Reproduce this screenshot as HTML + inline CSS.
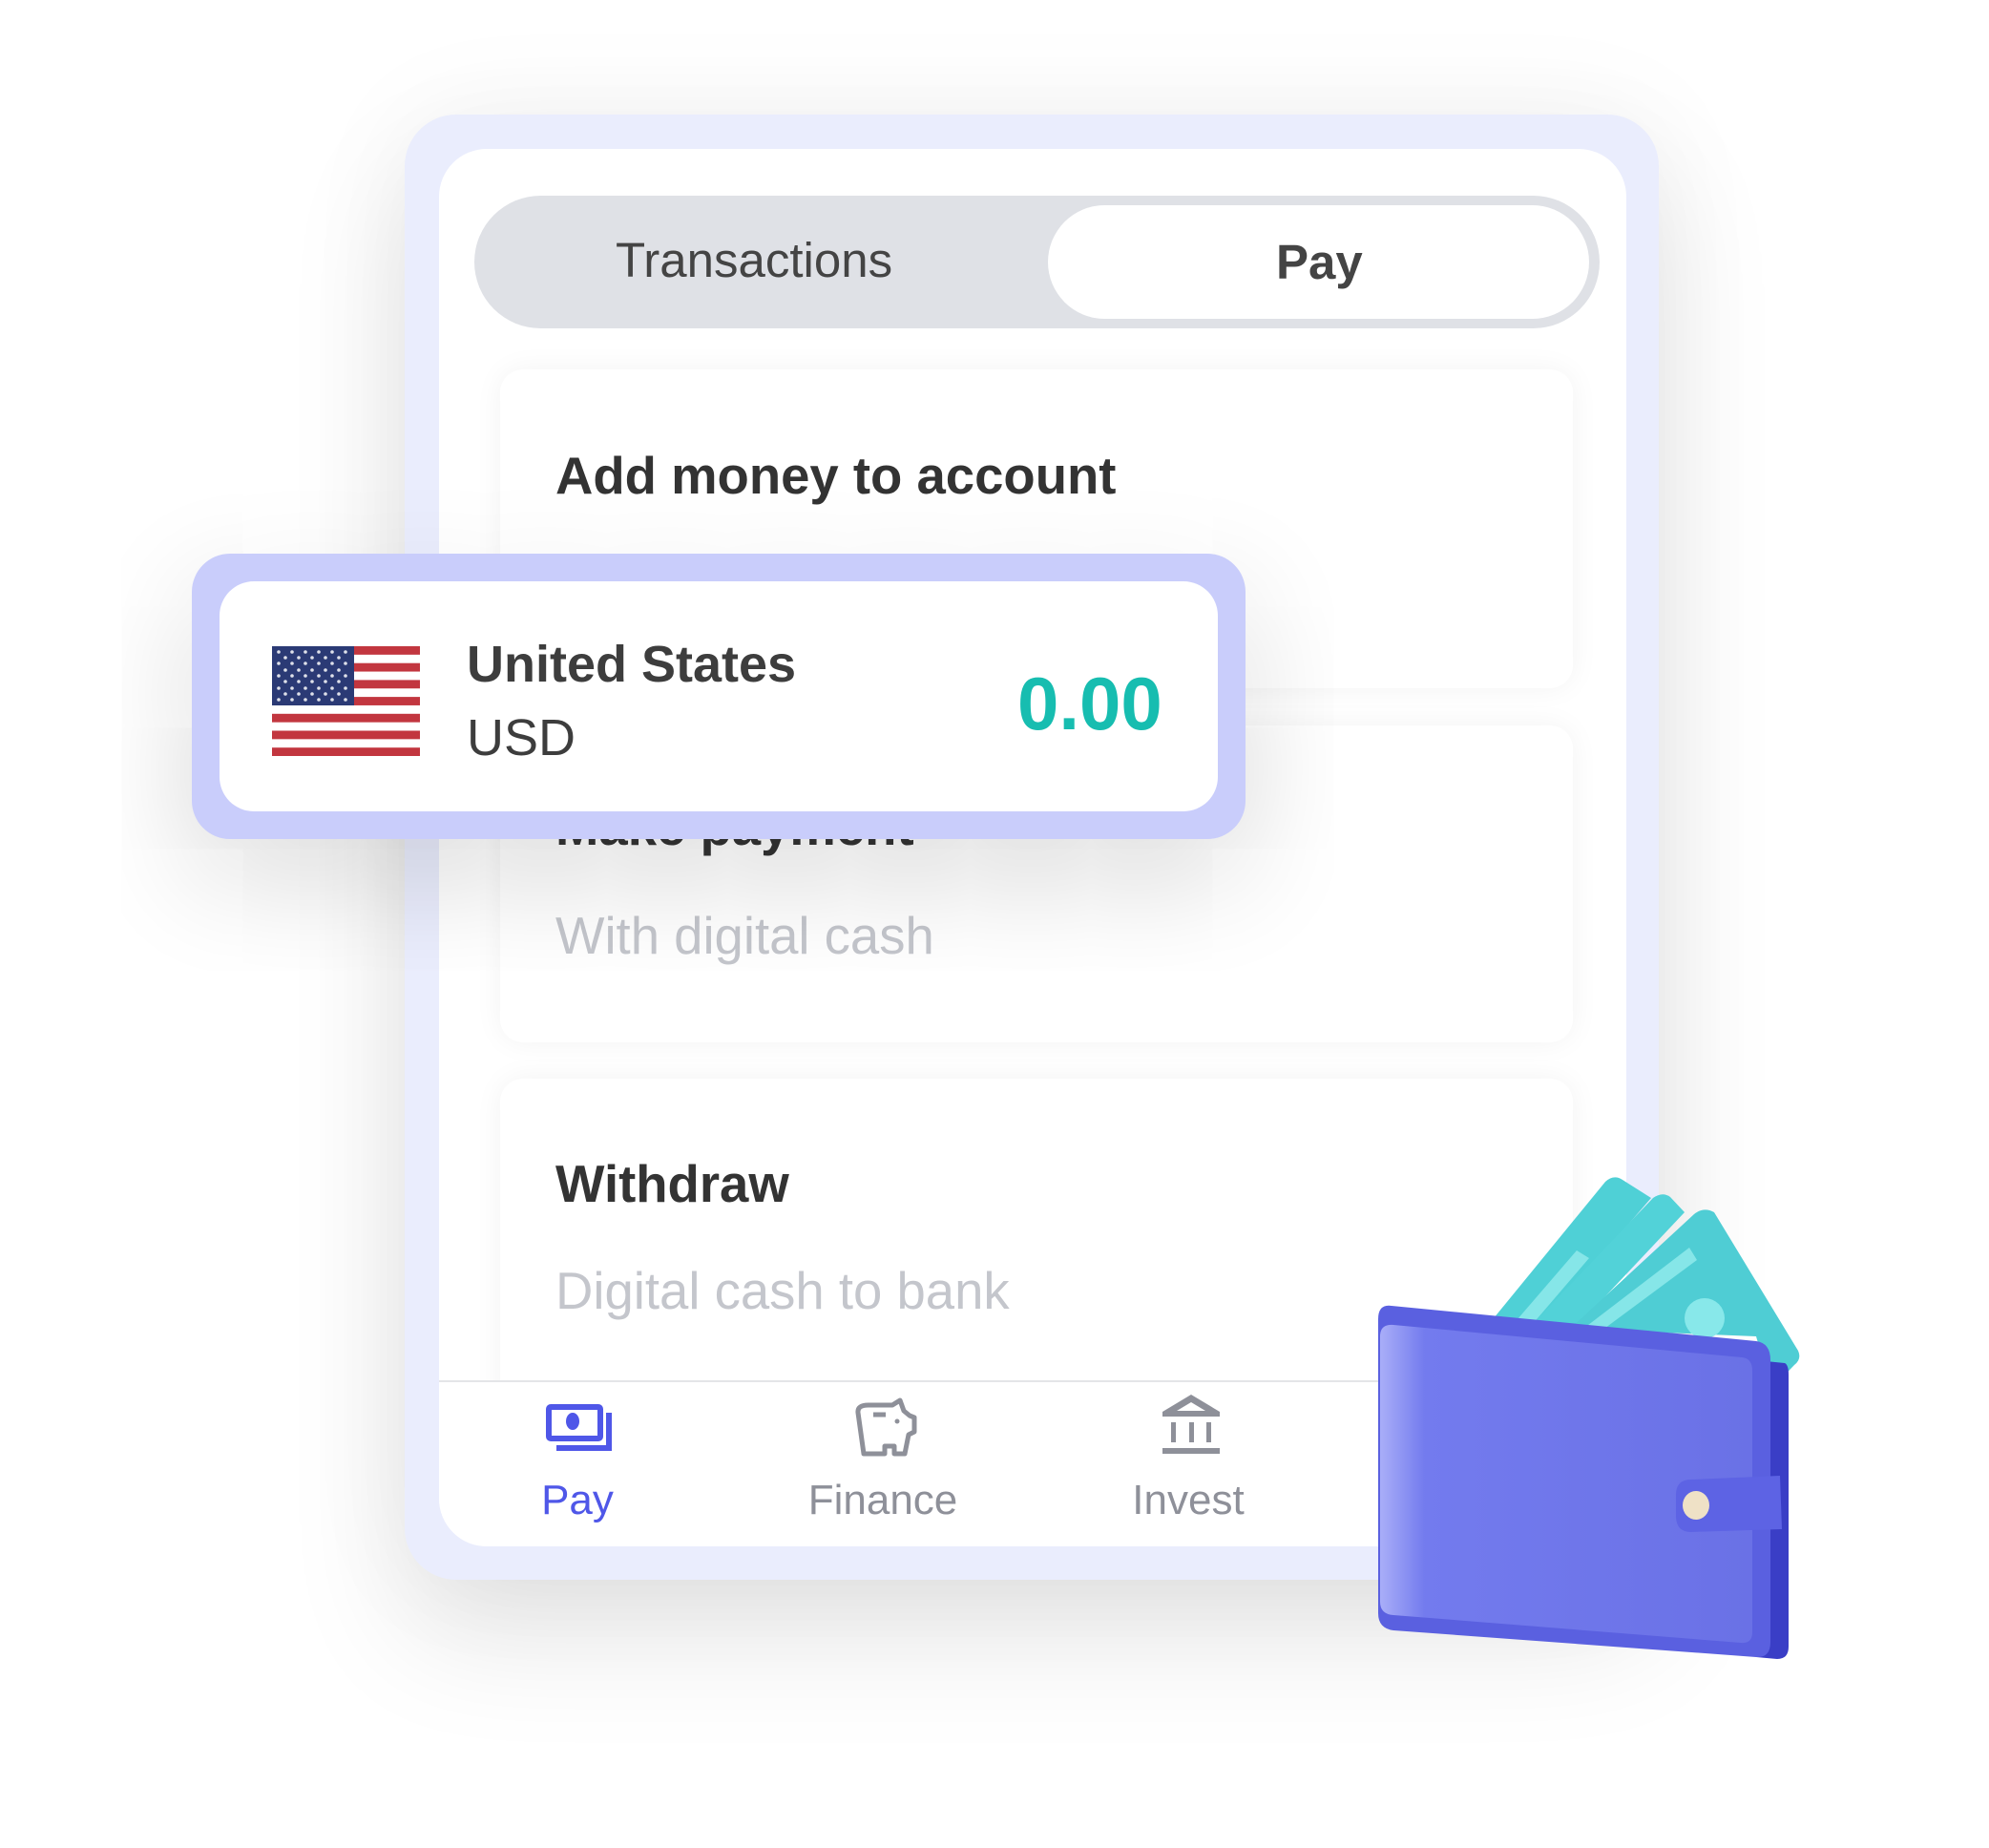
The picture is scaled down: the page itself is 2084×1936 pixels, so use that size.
<!DOCTYPE html>
<html><head><meta charset="utf-8"><style>
*{margin:0;padding:0;box-sizing:border-box}
body{width:2084px;height:1936px;background:#fff;position:relative;overflow:hidden;font-family:"Liberation Sans",Arial,sans-serif}
.a{position:absolute}
.t{position:absolute;white-space:nowrap;line-height:1}
</style></head><body>
<div class="a" style="left:424px;top:120px;width:1314px;height:1535px;border-radius:54px;background:#eaedfd;box-shadow:0 60px 160px rgba(0,0,0,0.10),0 0 120px rgba(0,0,0,0.05)"></div>
<div class="a" style="left:460px;top:156px;width:1244px;height:1464px;border-radius:50px;background:#fff;overflow:hidden">
  <div class="a" style="left:37px;top:49px;width:1179px;height:139px;border-radius:70px;background:#dfe1e6"></div>
  <div class="a" style="left:638px;top:59px;width:567px;height:119px;border-radius:60px;background:#fff"></div>
  <div class="t" style="left:185px;top:91px;font-size:51px;color:#444">Transactions</div>
  <div class="t" style="left:877px;top:93px;font-size:51px;font-weight:bold;color:#444">Pay</div>
  <div class="a" style="left:64px;top:231px;width:1124px;height:334px;border-radius:24px;background:#fff;box-shadow:0 0 30px rgba(0,0,0,0.05)"></div>
  <div class="a" style="left:64px;top:604px;width:1124px;height:332px;border-radius:24px;background:#fff;box-shadow:0 0 30px rgba(0,0,0,0.05)"></div>
  <div class="a" style="left:64px;top:974px;width:1124px;height:400px;border-radius:24px;background:#fff;box-shadow:0 0 30px rgba(0,0,0,0.05)"></div>
  <div class="t" style="left:122px;top:316px;font-size:54.5px;font-weight:bold;color:#333">Add money to account</div>
  <div class="t" style="left:122px;top:684px;font-size:54.5px;font-weight:bold;color:#333">Make payment</div>
  <div class="t" style="left:122px;top:798px;font-size:54.5px;color:#c4c6cc">With digital cash</div>
  <div class="t" style="left:122px;top:1058px;font-size:54.5px;font-weight:bold;color:#333">Withdraw</div>
  <div class="t" style="left:122px;top:1170px;font-size:54.5px;color:#c4c6cc">Digital cash to bank</div>
  <div class="a" style="left:0;top:1290px;width:1244px;height:174px;background:#fff;border-top:2px solid #e4e5e8"></div>
  <div class="t" style="left:105px;top:1394px;font-size:44px;color:#4f57e8;width:80px;text-align:center">Pay</div>
  <div class="t" style="left:365px;top:1394px;font-size:44px;color:#8e9099;width:200px;text-align:center">Finance</div>
  <div class="t" style="left:685px;top:1394px;font-size:44px;color:#8e9099;width:200px;text-align:center">Invest</div>
</div>
<svg class="a" style="left:0;top:0" width="2084" height="1936">
  <g fill="none" stroke="#4f57e8" stroke-width="6">
    <rect x="575" y="1474" width="54" height="33" rx="2"/>
    <path d="M638 1480 V1517 H583"/>
  </g>
  <ellipse cx="600" cy="1489" rx="7" ry="9" fill="#4f57e8"/>
  <g fill="none" stroke="#8e9099" stroke-width="5" stroke-linejoin="round">
    <path d="M905 1523 L899 1480 Q898 1472 910 1472 L935 1472 L943 1467 L947 1478 L953 1483 L958 1485 L958 1500 L952 1503 L948 1523 L937 1523 L937 1515 L927 1515 L927 1523 Z"/>
    <path d="M915 1482 H928"/>
  </g>
  <circle cx="940" cy="1489" r="2.5" fill="#8e9099"/>
  <g fill="#8e9099">
    <path d="M1248 1461 L1278 1479 V1484 H1218 V1479 Z M1248 1469 L1233 1478 H1263 Z" fill-rule="evenodd"/>
    <rect x="1227" y="1490" width="5" height="21"/><rect x="1246" y="1490" width="5" height="21"/><rect x="1264" y="1490" width="5" height="21"/>
    <rect x="1218" y="1517" width="60" height="6"/>
  </g>
</svg>
<div class="a" style="left:201px;top:580px;width:1104px;height:299px;border-radius:40px;background:#c9cdfb;box-shadow:0 40px 120px rgba(0,0,0,0.16)"></div>
<div class="a" style="left:230px;top:609px;width:1046px;height:241px;border-radius:36px;background:#fff"></div>
<svg class="a" style="left:285px;top:677px" width="155" height="115" viewBox="0 0 155 115">
  <rect width="155" height="115" fill="#fff"/>
  <g fill="#c2363f">
    <rect y="0" width="155" height="8.85"/><rect y="17.7" width="155" height="8.85"/><rect y="35.4" width="155" height="8.85"/><rect y="53.1" width="155" height="8.85"/><rect y="70.8" width="155" height="8.85"/><rect y="88.5" width="155" height="8.85"/><rect y="106.2" width="155" height="8.8"/>
  </g>
  <rect width="86" height="62" fill="#2b3a75"/>
  <g fill="#fff" opacity="0.85">
    <circle cx="7" cy="6" r="1.8"/><circle cx="21" cy="6" r="1.8"/><circle cx="35" cy="6" r="1.8"/><circle cx="49" cy="6" r="1.8"/><circle cx="63" cy="6" r="1.8"/><circle cx="77" cy="6" r="1.8"/>
    <circle cx="14" cy="12" r="1.8"/><circle cx="28" cy="12" r="1.8"/><circle cx="42" cy="12" r="1.8"/><circle cx="56" cy="12" r="1.8"/><circle cx="70" cy="12" r="1.8"/>
    <circle cx="7" cy="18" r="1.8"/><circle cx="21" cy="18" r="1.8"/><circle cx="35" cy="18" r="1.8"/><circle cx="49" cy="18" r="1.8"/><circle cx="63" cy="18" r="1.8"/><circle cx="77" cy="18" r="1.8"/>
    <circle cx="14" cy="25" r="1.8"/><circle cx="28" cy="25" r="1.8"/><circle cx="42" cy="25" r="1.8"/><circle cx="56" cy="25" r="1.8"/><circle cx="70" cy="25" r="1.8"/>
    <circle cx="7" cy="31" r="1.8"/><circle cx="21" cy="31" r="1.8"/><circle cx="35" cy="31" r="1.8"/><circle cx="49" cy="31" r="1.8"/><circle cx="63" cy="31" r="1.8"/><circle cx="77" cy="31" r="1.8"/>
    <circle cx="14" cy="37" r="1.8"/><circle cx="28" cy="37" r="1.8"/><circle cx="42" cy="37" r="1.8"/><circle cx="56" cy="37" r="1.8"/><circle cx="70" cy="37" r="1.8"/>
    <circle cx="7" cy="44" r="1.8"/><circle cx="21" cy="44" r="1.8"/><circle cx="35" cy="44" r="1.8"/><circle cx="49" cy="44" r="1.8"/><circle cx="63" cy="44" r="1.8"/><circle cx="77" cy="44" r="1.8"/>
    <circle cx="14" cy="50" r="1.8"/><circle cx="28" cy="50" r="1.8"/><circle cx="42" cy="50" r="1.8"/><circle cx="56" cy="50" r="1.8"/><circle cx="70" cy="50" r="1.8"/>
    <circle cx="7" cy="56" r="1.8"/><circle cx="21" cy="56" r="1.8"/><circle cx="35" cy="56" r="1.8"/><circle cx="49" cy="56" r="1.8"/><circle cx="63" cy="56" r="1.8"/><circle cx="77" cy="56" r="1.8"/>
  </g>
</svg>
<div class="t" style="left:489px;top:669px;font-size:54px;font-weight:bold;color:#3d3d3d">United States</div>
<div class="t" style="left:489px;top:746px;font-size:54px;color:#3d3d3d">USD</div>
<div class="t" style="left:1066px;top:698px;font-size:78px;font-weight:bold;color:#17bdb0">0.00</div>
<svg class="a" style="left:1400px;top:1200px" width="550" height="580" viewBox="0 0 550 580">
  <defs>
    <linearGradient id="g" x1="0" x2="1" y1="0" y2="0">
      <stop offset="0" stop-color="#a9aef8"/><stop offset="0.12" stop-color="#737bee"/><stop offset="1" stop-color="#6a71e6"/>
    </linearGradient>
  </defs>
  <path d="M165 181 L282 38 Q291 30 300 36 L330 55 L215 188 Z" fill="#4fd0d6"/>
  <path d="M190 182 L252 110 L265 118 L205 188 Z" fill="#86e6e8"/>
  <path d="M205 188 L332 55 Q342 48 350 54 L365 70 L250 192 Z" fill="#52d2d8"/>
  <path d="M245 192 L375 72 Q385 64 396 70 L484 215 Q488 224 480 230 L456 255 L440 200 Z" fill="#4fcdd4"/>
  <path d="M255 195 L370 107 L378 120 L270 200 Z" fill="#86e6e8"/>
  <circle cx="386" cy="181" r="21" fill="#88e8ea"/>
  <path d="M440 225 L470 228 Q474 230 474 240 L474 525 Q474 538 462 538 L440 536 Z" fill="#3a3ec6"/>
  <path d="M58 168 L440 205 Q455 207 455 225 L455 520 Q455 537 440 536 L60 508 Q44 506 44 490 L44 182 Q44 166 58 168 Z" fill="#5a60e0"/>
  <path d="M60 188 L425 222 Q436 223 436 236 L436 510 Q436 522 424 521 L60 492 Q46 491 46 478 L46 200 Q46 187 60 188 Z" fill="url(#g)"/>
  <path d="M372 350 L465 346 L467 402 L372 405 Q356 405 356 388 L356 366 Q356 350 372 350 Z" fill="#5d63e4"/>
  <ellipse cx="377" cy="377" rx="14" ry="15" fill="#efe1c6"/>
</svg>
</body></html>
